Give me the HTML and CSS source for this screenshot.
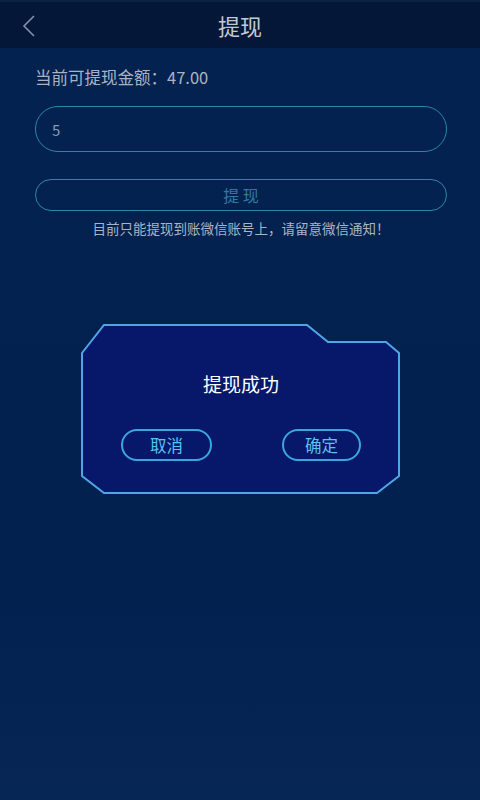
FILE: index.html
```html
<!DOCTYPE html>
<html lang="zh-CN">
<head>
    <meta charset="UTF-8">
    <meta name="viewport" content="width=device-width, initial-scale=1.0">
    <title>提现</title>
    <link rel="stylesheet" href="styles.css">
</head>
<body>

    <div class="header">
        <svg class="back" width="14" height="22" viewBox="0 0 14 22">
            <polyline points="12,1 2,11 12,21" fill="none" stroke="#8191aa" stroke-width="1.6"/>
        </svg>
        <h1 class="title">提现</h1>
    </div>

    <div class="content">
        <p class="balance">当前可提现金额：47.00</p>
        <div class="amount-input">5</div>
        <button class="submit">提 现</button>
        <p class="notice">目前只能提现到账微信账号上，请留意微信通知！</p>
    </div>

    <div class="dialog">
        <svg class="dialog-frame" width="320" height="170" viewBox="0 0 320 170">
            <polygon points="23,1 226,1 247,18 305,18 318,29 318,152 296,169 23,169 1,152 1,29"
                     fill="#07186a" stroke="#4ea6e6" stroke-width="2"/>
        </svg>
        <p class="dialog-title">提现成功</p>
        <div class="dialog-actions">
            <button class="dialog-btn cancel">取消</button>
            <button class="dialog-btn ok">确定</button>
        </div>
    </div>

</body>
</html>
```

FILE: styles.css
```css
body {
    margin: 0;
    width: 480px;
    height: 800px;
    overflow: hidden;
    position: relative;
    font-family: "Noto Sans CJK SC", "Liberation Sans", sans-serif;
    background: linear-gradient(to bottom, #03224f 0%, #03214f 75%, #062656 100%);
}
.header {
    height: 48px;
    background: #041738;
    border-top: 2px solid #0b2146;
    box-sizing: border-box;
    display: flex;
    align-items: center;
    justify-content: center;
    position: relative;
}
.back {
    position: absolute;
    left: 22px;
    top: 13px;
}
.title {
    margin: 0;
    font-size: 22px;
    font-weight: normal;
    color: #c3cad6;
}
.content {
    padding: 0 33px 0 35px;
}
.balance {
    margin: 17px 0 0;
    font-size: 16.5px;
    line-height: 24px;
    color: #aab3c3;
}
.amount-input {
    margin-top: 17px;
    height: 46px;
    border: 1.5px solid #2b86ad;
    border-radius: 24px;
    box-sizing: border-box;
    padding-left: 16px;
    display: flex;
    align-items: center;
    font-size: 15px;
    color: #8a9ab2;
}
.submit {
    display: block;
    width: 100%;
    margin-top: 27px;
    height: 32px;
    background: transparent;
    border: 1.5px solid #2b86ad;
    border-radius: 17px;
    font-family: inherit;
    font-size: 16px;
    color: #2e7aa2;
    cursor: pointer;
}
.notice {
    margin: 7px 0 0;
    text-align: center;
    font-size: 13.5px;
    line-height: 20px;
    color: #a9b4c6;
}
.dialog {
    position: absolute;
    left: 81px;
    top: 324px;
    width: 320px;
    height: 170px;
}
.dialog-frame {
    position: absolute;
    left: 0;
    top: 0;
}
.dialog-title {
    position: relative;
    margin: 0;
    padding-top: 47px;
    text-align: center;
    font-size: 19px;
    line-height: 26px;
    color: #ffffff;
}
.dialog-actions {
    position: relative;
    display: flex;
    justify-content: space-between;
    padding: 0 40px 0 40px;
    margin-top: 32px;
}
.dialog-btn {
    height: 32px;
    background: transparent;
    border: 2px solid #3aa6e0;
    border-radius: 16px;
    font-family: inherit;
    font-size: 16.5px;
    color: #5bc3f0;
    cursor: pointer;
}
.cancel {
    width: 91px;
}
.ok {
    width: 79px;
}
```
